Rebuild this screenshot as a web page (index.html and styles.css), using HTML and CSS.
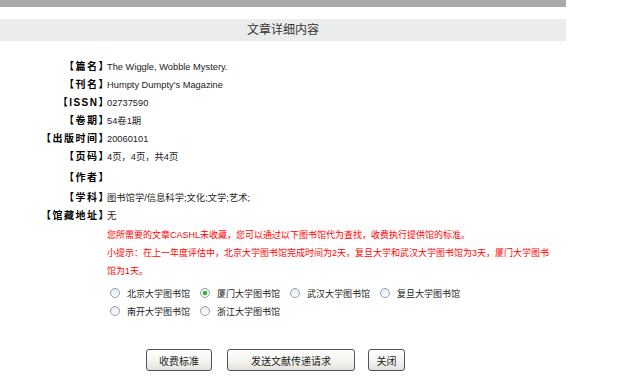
FILE: index.html
```html
<!DOCTYPE html>
<html lang="zh-CN">
<head>
    <meta charset="UTF-8">
    <title>文章详细内容</title>
    <link rel="stylesheet" href="styles.css">
</head>
<body>
    <div id="topbar"></div>

    <div id="title">文章详细内容</div>

    <div class="info">
        <div class="label">【篇名】</div><div class="value">The Wiggle, Wobble Mystery.</div>
        <div class="label">【刊名】</div><div class="value">Humpty Dumpty's Magazine</div>
        <div class="label">【ISSN】</div><div class="value">02737590</div>
        <div class="label">【卷期】</div><div class="value">54卷1期</div>
        <div class="label">【出版时间】</div><div class="value">20060101</div>
        <div class="label">【页码】</div><div class="value">4页，4页，共4页</div>
        <div class="label tall">【作者】</div><div class="value tall"></div>
        <div class="label">【学科】</div><div class="value">图书馆学/信息科学;文化;文学;艺术;</div>
        <div class="label">【馆藏地址】</div><div class="value">无</div>
    </div>

    <div class="notice">
        <p>您所需要的文章CASHL未收藏，您可以通过以下图书馆代为查找，收费执行提供馆的标准。</p>
        <p>小提示：在上一年度评估中，北京大学图书馆完成时间为2天，复旦大学和武汉大学图书馆为3天，厦门大学图书馆为1天。</p>
    </div>

    <form class="libs">
        <label><input type="radio" name="lib">北京大学图书馆</label>
        <label><input type="radio" name="lib" checked>厦门大学图书馆</label>
        <label><input type="radio" name="lib">武汉大学图书馆</label>
        <label><input type="radio" name="lib">复旦大学图书馆</label>
        <label><input type="radio" name="lib">南开大学图书馆</label>
        <label><input type="radio" name="lib">浙江大学图书馆</label>
    </form>

    <div class="actions">
        <button class="btn-fee">收费标准</button>
        <button class="btn-send">发送文献传递请求</button>
        <button class="btn-close">关闭</button>
    </div>
</body>
</html>
```

FILE: styles.css
```css
body {
    font-family: 'Liberation Sans', 'Noto Sans CJK SC', sans-serif;
    font-size: 9px;
    color: #222;
    background-color: #fff;
    margin: 0;
    padding: 0;
}

#topbar {
    width: 566px;
    height: 7px;
    background-color: #aaa;
}

#title {
    width: 566px;
    height: 22px;
    margin-top: 12px;
    line-height: 22px;
    text-align: center;
    font-size: 12px;
    color: #333;
    background-color: #ebeded;
}

.info {
    display: grid;
    grid-template-columns: 105px 440px;
    column-gap: 2px;
    margin-top: 17px;
}

.info .label,
.info .value {
    height: 18px;
    line-height: 18px;
    white-space: nowrap;
}

.info .value {
    font-size: 9.3px;
}

.info .label {
    text-align: right;
    font-size: 10px;
    font-weight: bold;
    font-feature-settings: "halt";
    letter-spacing: 1.5px;
    color: #000;
}

.info .tall {
    height: 23px;
    line-height: 23px;
}

.notice {
    width: 444px;
    margin: 1px 0 0 107px;
    color: #f00;
    line-height: 18px;
}

.notice p {
    margin: 0;
}

.libs {
    display: flex;
    flex-wrap: wrap;
    width: 360px;
    margin: 4px 0 0 109px;
}

.libs label {
    display: flex;
    align-items: center;
    width: 90px;
    height: 18px;
}

.libs input {
    appearance: none;
    -webkit-appearance: none;
    width: 10px;
    height: 10px;
    margin: 0 7px 0 1px;
    border: 1px solid #8fa3b3;
    border-radius: 50%;
    background: linear-gradient(#e6e9ec, #fff);
    box-sizing: border-box;
}

.libs input:checked {
    background: radial-gradient(circle, #3fae3a 0, #3fae3a 2px, #e9f2e6 2.5px, #fff 5px);
}

.actions {
    display: flex;
    margin: 29px 0 0 146px;
}

.actions button {
    height: 22px;
    padding: 0;
    font-family: 'Liberation Sans', 'Noto Sans CJK SC', sans-serif;
    font-size: 10px;
    color: #222;
    border: 1px solid #4a5560;
    border-radius: 3px;
    background: linear-gradient(#fff, #f3f3ef 60%, #e2e1da);
}

.btn-fee {
    width: 66px;
}

.btn-send {
    width: 128px;
    margin-left: 15px;
}

.btn-close {
    width: 37px;
    margin-left: 13px;
}
```
